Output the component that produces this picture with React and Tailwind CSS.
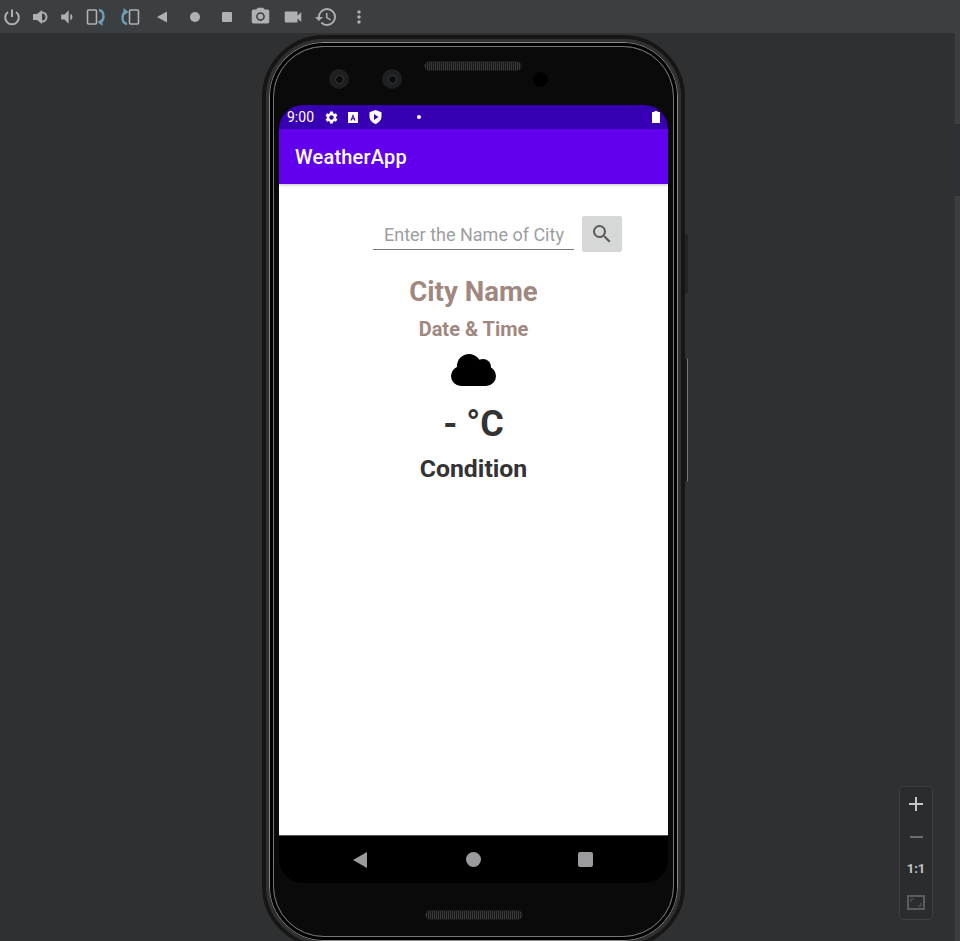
import React from "react";
import {
  MdVolumeDown,
  MdCameraAlt,
  MdVideocam,
  MdRestore,
  MdMoreVert,
  MdSearch,
  MdSettings,
} from "react-icons/md";

// rotate icons in the emulator toolbar
const RotateIcon = ({ flip }) => (
  <svg width="20" height="20" viewBox="0 0 20 20" fill="none" className={flip ? "rotate-180" : ""}>
    <rect x="1.500" y="3" width="9" height="14" rx="1" stroke="#aeb0b2" strokeWidth="1.6" />
    <path d="M13 3c3 .5 4.500 3 4.500 6.500s-1 4.500-3 5.500" stroke="#6d9fb8" strokeWidth="2.400" />
    <path d="M11.500 15l5-3.500v7.500z" fill="#6d9fb8" />
  </svg>
);

const Toolbar = () => (
  <div className="flex items-center h-[33px] pl-[2px] bg-[#3c3f41] text-[#aeb0b2] shrink-0">
    <svg width="20" height="20" viewBox="0 0 20 20" fill="none" stroke="currentColor" strokeWidth="2">
      <path d="M10 2.500v7.500" />
      <path d="M6 5a6.800 6.800 0 1 0 8 0" />
    </svg>
    <svg width="20" height="20" viewBox="0 0 20 20" fill="none" className="ml-[9px]">
      <path d="M2 7h4l5-4v14l-5-4H2z" fill="currentColor" />
      <path d="M11 5.500a4.500 4.500 0 0 1 0 9" stroke="currentColor" strokeWidth="2" />
    </svg>
    <MdVolumeDown size={20} className="ml-[6px]" />
    <div className="ml-[9px]"><RotateIcon /></div>
    <div className="ml-[14px]"><RotateIcon flip /></div>
    <svg width="20" height="20" viewBox="0 0 20 20" className="ml-[12px]">
      <path d="M5 10l10-5.500v11z" fill="currentColor" />
    </svg>
    <svg width="20" height="20" viewBox="0 0 20 20" className="ml-[13px]">
      <circle cx="10" cy="10" r="5" fill="currentColor" />
    </svg>
    <svg width="20" height="20" viewBox="0 0 20 20" className="ml-[12px]">
      <rect x="5" y="5" width="10" height="10" rx="1" fill="currentColor" />
    </svg>
    <MdCameraAlt size={21} className="ml-[13px]" />
    <MdVideocam size={22} className="ml-[11px]" />
    <MdRestore size={24} className="ml-[10px]" />
    <MdMoreVert size={20} className="ml-[11px]" />
  </div>
);

const Camera = () => (
  <div className="w-[20px] h-[20px] rounded-full bg-[#1d1f20] flex items-center justify-center">
    <div className="w-[9px] h-[9px] rounded-full bg-[#0c0c0c] border border-[#3a3a3a]" />
  </div>
);

const Speaker = () => (
  <div className="w-[98px] h-[10px] rounded-full border border-[#1c1c1c] bg-[repeating-linear-gradient(90deg,#3a3a3a_0,#3a3a3a_1px,#161616_1px,#161616_2px)]" />
);

const StatusBar = () => (
  <div className="flex items-center h-[24px] pl-[8px] pr-[8px] bg-[#3700b3] rounded-t-[24px] text-white">
    <span className="text-[14px] font-normal w-[27px] leading-none">9:00</span>
    <MdSettings size={15} className="ml-[10px]" />
    <svg width="10" height="11" viewBox="0 0 10 11" className="ml-[9px]">
      <path fillRule="evenodd" d="M0 0h10v11H0zM5 2L2.500 8.500h1.300l.4-1.200h1.600l.4 1.200h1.300zM5 4.600l.5 1.600h-1z" fill="#fff" />
    </svg>
    <svg width="13" height="14" viewBox="0 0 13 14" className="ml-[11px]">
      <path fillRule="evenodd" d="M6.500 0L12.500 2.300v4.200c0 3.500-2.500 6.300-6 7.500-3.500-1.200-6-4-6-7.500V2.300zM5 4v6l4.500-3z" fill="#fff" />
    </svg>
    <div className="w-[4px] h-[4px] rounded-full bg-white ml-[35px]" />
    <svg width="8" height="12" viewBox="0 0 8 12" className="ml-auto">
      <path d="M2.500 0h3v1H8v11H0V1h2.500z" fill="#fff" />
    </svg>
  </div>
);

const CloudIcon = () => (
  <svg width="45" height="32" viewBox="0 0 45 32" fill="#000">
    <circle cx="18" cy="12" r="12" />
    <circle cx="32" cy="13" r="8" />
    <circle cx="10" cy="22" r="10" />
    <circle cx="35" cy="22" r="10" />
    <rect x="10" y="16" width="25" height="16" />
  </svg>
);

const WeatherContent = () => (
  <div className="h-[651px] bg-white flex flex-col font-['Roboto',sans-serif]">
    <div className="flex justify-end items-start gap-[8px] pt-[32px] pr-[46px]">
      <div className="w-[201px] h-[34px] border-b border-[#777] pl-[11px] text-[18px] leading-[38px] text-[#9e9e9e]">
        Enter the Name of City
      </div>
      <button className="w-[40px] h-[36px] bg-[#d6d7d7] rounded-[2px] flex items-center justify-center text-[#5a5a5a]">
        <MdSearch size={24} />
      </button>
    </div>
    <div className="flex flex-col items-center">
      <h2 className="mt-[22px] text-[27.6px] leading-[36px] font-bold text-[#a1887f]">City Name</h2>
      <p className="mt-[7px] text-[20px] leading-[24px] font-bold text-[#a1887f]">Date &amp; Time</p>
      <div className="mt-[13px]"><CloudIcon /></div>
      <p className="mt-[18px] text-[36px] leading-[40px] font-bold text-[#333]">- °C</p>
      <p className="mt-[9px] text-[24.8px] leading-[32px] font-bold text-[#333]">Condition</p>
    </div>
  </div>
);

const NavBar = () => (
  <div className="flex items-center justify-between h-[48px] pl-[74px] pr-[75px] bg-black rounded-b-[24px] border-t border-[#555]">
    <svg width="14" height="16" viewBox="0 0 14 16"><path d="M0 8L14 0v16z" fill="#9b9b9d" /></svg>
    <div className="w-[15px] h-[15px] rounded-full bg-[#9b9b9d] ml-[1px]" />
    <div className="w-[15px] h-[15px] rounded-[2px] bg-[#9b9b9d]" />
  </div>
);

const Phone = () => (
  <div className="relative w-[423px] h-[913px] mt-[2px] ml-[262px] rounded-[62px] border-[4px] border-[#161616]">
    {/* side buttons */}
    <div className="absolute left-[419px] top-[195px] w-[3px] h-[59px] rounded-r-[2px] bg-[#222324]" />
    <div className="absolute left-[419px] top-[319px] w-[3px] h-[124px] rounded-r-[2px] bg-[#1a1b1c] border-r border-[#777]" />
    <div className="h-full rounded-[58px] border-[3px] border-[#303030]">
      <div className="h-full rounded-[55px] border border-[#8a8a8a]">
        <div className="h-full rounded-[54px] border-[3px] border-black">
          <div className="h-full rounded-[51px] border border-[#777] bg-[#0a0a0a] px-[5px]">
            {/* camera strip */}
            <div className="flex items-center h-[58px] pt-[6px] pl-[50px]">
              <Camera />
              <div className="ml-[33px]"><Camera /></div>
              <div className="ml-[22px] -mt-[27px]"><Speaker /></div>
              <div className="ml-[11px] w-[15px] h-[15px] rounded-full bg-black" />
            </div>
            <StatusBar />
            <div className="flex items-center h-[55px] pl-[16px] bg-[#6200ee] text-white text-[20px] tracking-[0.2px] font-medium shadow-[0_1px_3px_rgba(0,0,0,0.25)] relative">
              WeatherApp
            </div>
            <WeatherContent />
            <NavBar />
            <div className="flex justify-center mt-[27px]"><Speaker /></div>
          </div>
        </div>
      </div>
    </div>
  </div>
);

const ZoomPanel = () => (
  <div className="absolute left-[899px] top-[753px] w-[34px] h-[134px] rounded-[4px] border border-[#3c3f41] bg-[#2b2c2d] flex flex-col items-center text-[#c4c6c8]">
    <svg width="14" height="14" viewBox="0 0 14 14" className="mt-[10px]">
      <path d="M6 0h2v6h6v2H8v6H6V8H0V6h6z" fill="currentColor" />
    </svg>
    <div className="w-[13px] h-[2px] bg-[#6b6d6f] mt-[25px]" />
    <span className="mt-[24px] text-[13px] leading-[14px] font-bold font-['Roboto',sans-serif]">1:1</span>
    <svg width="18" height="15" viewBox="0 0 18 15" fill="none" stroke="#5a5c5e" className="mt-[19px]">
      <rect x="1" y="1" width="16" height="13" strokeWidth="2" />
      <path d="M4 7V4h3M14 8v3h-3" strokeWidth="1" />
    </svg>
  </div>
);

export default function App() {
  return (
    <div className="h-[941px] overflow-hidden flex flex-col bg-[#2f3031] font-['Roboto',sans-serif]">
      <Toolbar />
      <div className="flex flex-1 min-h-0">
        <div className="relative flex-1">
          <Phone />
          <ZoomPanel />
        </div>
        <div className="w-[6px] bg-[#3c3f41] border-l border-[#333] pt-[91px]">
          <div className="h-[72px] bg-[#2f3036]" />
        </div>
      </div>
    </div>
  );
}
